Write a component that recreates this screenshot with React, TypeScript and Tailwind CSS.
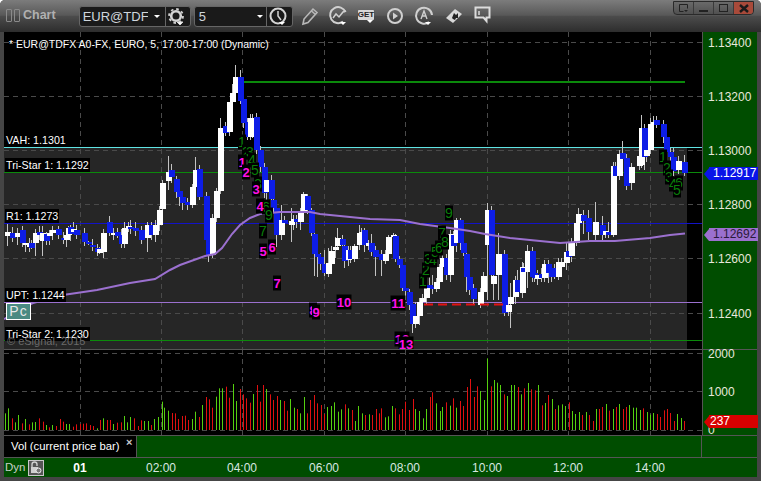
import React from "react";

type C = [number, number, number, "w" | "b", number?, number?];

const candles: C[] = [
  [7,232,236,"w",224,246],[12,233,238,"b"],[17,233,237,"w",228,245],[22,230,243,"b",226,247],[25,243,245,"w",236,252],[29,244,247,"w",238,252],[31,243,248,"b"],[35,233,243,"w",229,256],[39,232,235,"b",226,240],[42,233,241,"w",226,256],[46,234,241,"b"],[49,233,236,"w",230,245],[52,230,233,"w",226,240],[58,229,235,"b"],[63,238,240,"b",232,244],[66,235,240,"w",230,247],[68,228,235,"w",226,240],[70,227,234,"b"],[73,229,232,"w"],[76,230,235,"b"],[84,233,242,"b",228,246],[88,242,244,"b"],[92,245,247,"b"],[97,248,252,"b",244,256],[99,249,253,"w"],[103,233,252,"w",229,258],[109,222,233,"b",216,236],[113,233,235,"w",228,240],[117,232,236,"b",228,238],[121,235,244,"b",229,248],[124,228,244,"w",222,248],[128,226,229,"w",222,232],[130,227,229,"b",220,234],[135,228,231,"b",222,236],[141,230,240,"b",226,244],[147,225,238,"w",222,252],[151,225,235,"b",222,240],[155,225,235,"w",220,242],
  [159,210,225,"w",206,231],[162,183,209,"w",180,212],[168,172,181,"w",156,190],[171,170,177,"b",164,183],[176,179,192,"b",176,198],[179,191,197,"b",188,206],[182,197,203,"b",194,210],[187,202,205,"b",198,210],[192,187,205,"w",184,208],[195,170,187,"w",157,190],[199,169,197,"b",165,200],[206,196,240,"b",192,254],[208,240,255,"b"],[212,218,255,"w",214,258],[216,191,218,"w",188,222],[220,128,191,"w",118,194],[225,126,133,"b",122,136],[229,102,132,"w",104,136],[232,93,102,"w",84,106],[235,77,93,"w",65,96],[240,77,101,"b",70,104],[243,99,123,"b",95,128],[247,122,137,"b",118,140],[250,118,137,"w",114,140],[252,118,135,"w",114,138],[256,117,150,"b",113,154],[260,150,167,"b",146,172],[264,167,193,"b",163,198],[266,180,192,"w",176,205],[271,180,199,"b",175,203],[273,200,208,"b",196,213],[276,208,235,"b",205,247],[281,220,235,"w",205,240],[284,220,223,"b",216,229],[291,221,225,"w",208,242],[293,219,222,"w",215,230],[296,219,222,"b",215,228],[300,212,222,"w",208,230],[303,194,212,"w",192,216],[307,196,210,"b",194,214],[311,210,233,"b",208,236],[314,234,254,"b",232,276],[317,254,257,"b",252,277],[320,257,264,"b",253,270],[324,264,273,"b",250,276],[328,263,274,"w",248,277],[331,251,264,"w",246,272],[335,247,250,"w",237,258],[337,238,246,"w",228,250],[342,239,245,"b",235,252],[344,246,261,"b",244,268],[348,250,260,"w",246,266],[350,250,259,"b",246,263],[354,246,259,"w",244,262],[359,233,245,"w",225,250],[361,232,236,"w",228,240],[364,230,245,"b",228,252],[368,243,246,"w",240,250],[371,243,252,"b",234,256],[375,250,257,"b",246,276],[381,254,260,"b",250,276],[385,254,261,"w",250,264],[388,237,254,"w",235,258],[393,235,237,"w",233,240],[395,236,259,"b",234,262],[399,259,265,"b",256,268],[402,265,288,"b",262,291],[405,288,291,"b",285,300],[409,292,305,"b",289,310],[412,304,324,"b",300,333],[415,316,324,"w",302,328],[419,302,316,"w",298,325],[422,298,302,"w",294,308],[426,285,298,"w",282,305],[429,285,288,"b",275,292],[432,287,289,"b",275,294],[436,282,289,"w",278,292],[439,267,282,"w",264,286],[442,258,267,"w",254,272],[446,258,275,"b",254,280],[450,234,275,"w",230,282],[453,235,246,"b",231,250],[456,220,243,"w",218,252],[460,220,243,"b",218,250],[463,243,253,"b",240,256],[466,254,277,"b",250,292],[469,277,290,"b",272,295],
  [473,288,299,"b",284,305],[480,292,305,"w",288,308],[483,276,292,"w",272,300],[487,210,245,"w",203,300],[491,210,275,"b",206,278],[493,276,284,"w",272,300],[498,254,275,"w",233,300],[504,254,313,"b",250,316],[508,305,312,"w",300,316],[510,297,304,"w",283,328],[515,280,297,"w",276,304],[517,280,292,"b",270,296],[522,267,293,"w",262,298],[523,268,272,"b"],[527,251,272,"w",245,288],[532,251,277,"b",247,282],[534,273,278,"b",268,282],[537,275,279,"w",270,285],[541,274,278,"b",268,282],[544,264,278,"w",260,282],[548,264,273,"b",260,283],[551,268,277,"b",264,282],[554,268,277,"b",264,279],[558,262,277,"w",258,280],[561,262,267,"w",258,272],[566,252,263,"w",243,270],[568,251,257,"b",243,262],[571,243,256,"w",238,262],[576,223,243,"w",217,246],[578,214,223,"w",208,228],[583,215,221,"b",210,234],[588,218,232,"b",210,240],[595,222,235,"w",202,240],[602,225,235,"b",216,240],[605,231,235,"w",225,238],[608,232,235,"b",222,238],[613,166,235,"w",162,237],[615,166,176,"b",162,182],[619,154,176,"w",150,180],[622,153,159,"b",141,170],[626,158,186,"b",154,190],[631,167,183,"w",163,190],[639,156,166,"w",150,170],[641,128,165,"w",115,168],[644,128,157,"b",124,170],[646,150,156,"w",146,162],[650,124,150,"w",118,154],[653,122,125,"w",116,128],[656,120,125,"b",116,128],[663,124,137,"b",120,143],[666,137,152,"b",134,156],[670,152,157,"b",148,172],[673,157,171,"b",148,176],[678,161,170,"w",156,174],[684,162,173,"b",155,176],
];

const vwap = "4,319 12,315 24,307 33,303 63,295 97,290 130,283 155,279 170,270 180,265 205,256 215,254 222,248 232,234 240,225 250,218 260,214 280,212 310,212 320,214 340,216 370,219 400,220 420,224 450,228 470,231 485,234 510,238 540,241 560,243 590,241 615,241 650,238 670,235 685,233.5";

const vol1 = "15g205 25g190 37r220 46g232 55g210 67r235 76g222 87r238 97g232 106g231 118r220 128r230 139g240 148r247 157g240 168r243 179r222 189r230 198g237 207g237 219r245 229r238 239r237 249r236 259r235 269r240 279r243 291g250 301r225 310g220 322r225 331r225 340g237 352r233 362r232 373g213 381g232 391g216 403r220 413r243 424r226 433g228 443g228 453r240 463g222 473g216 485g170 493g188 505g197 516r204 526r205 535r222 545r213 556r212 565r225 575g222 586g200 596r216 607g180 617r156 626r163 637r188 647g155 658g130 666g130 677r125 688r158 698g117 709g168 719r132 728r148 739r160 749r173 760g147 770r120 780r170 790r120 799g132 811r148 820r165 830r153 841g165 851r168 860r197 871g162 881g188 892r192 901g205 911g156 921r205 931r165 943r150 952r175 962r180 973r207 982g186 992g183 1003g172 1013g200 1024g193 1034r178 1045g190 1055r195 1065g228 1075g183 1085g205 1095r210 1106g208 1116r210 1127r192 1137r205";
const vol2 = "3r190 16g217 25g214 37g183 46r190 56r208 67r192 76r170 87r195 98r162 106g192 118g198 128g220 139g192 149r156 157r142 169g175 179g198 187g186 199r172 209g182 220r160 229g188 239r168 250r183 260r126 271r102 281r156 290r124 301g138 311g165 322g40 332r124 341g105 352g113 361g120 373r148 382g153 392g120 403g120 413r126 424g148 433r130 443g114 454r133 464r136 473g120 485r181 494g174 505r150 515g162 524r192 535g181 545g178 556g183 566r172 575g198 586g207 596g201 607r210 617g201 626r210 638r228 647g192 658r192 667r186 677g177 688r197 698g192 707r186 718g177 728r192 739r186 748g180 758g188 769g188 779g195 790r190 800g201 809g209 820g204 830r207 841r216 851r196 860r192 871r204 881r228 892g207 902g219 911r228";

function parseVol(s: string, off: number) {
  return s.split(" ").map((t) => {
    const m = t.match(/(\d+)([gr])(\d+)/)!;
    return { x: Math.round(off + +m[1] / 3), top: 345 + +m[3] / 3, c: m[2] };
  });
}
const vols = [...parseVol(vol1, 0), ...parseVol(vol2, 380)];

const magenta: [string, number, number][] = [
  ["1",242,162],["2",246,172],["3",256,189],["4",260,206],["5",263,251],["6",272,247],["7",277,283],["8",313,310],["9",316,312],["10",344,302],["11",398,303],["12",402,339],["13",406,344],
];
const greens: [string, number, number][] = [
  ["1",242,142],["2",246,152],["3",250,152],["4",252,160],["5",255,170],["3",258,184],["6",266,207],["9",269,215],["7",263,231],
  ["1",423,281],["2",426,270],["3",428,259],["4",433,260],["5",435,252],["6",439,248],["7",442,233],["8",445,242],["9",449,213],
  ["1",663,157],["2",667,168],["3",669,177],["4",673,184],["6",679,183],["5",677,190],
];

const gridY = [42.5, 96.5, 150.5, 204.5, 258.5, 313.5];
const gridX = [80.5, 161.5, 242.5, 324.5, 405.5, 487.5, 568.5, 650.5];
const prices: [string, number][] = [["1.13400",43],["1.13200",97],["1.13000",151],["1.12800",205],["1.12600",259],["1.12400",314]];
const times: [string, number][] = [["01",80],["02:00",161],["04:00",242],["06:00",324],["08:00",405],["10:00",487],["12:00",568],["14:00",650]];

function Mark({ t, x, y, color, bold }: { t: string; x: number; y: number; color: string; bold?: boolean }) {
  const w = t.length > 1 ? 15 : 8;
  return (
    <g>
      <rect x={x - w / 2} y={y - 7.5} width={w} height={15} fill="#000" />
      <text x={x} y={y + 5} textAnchor="middle" fontSize={bold ? 13 : 14} fontWeight={bold ? 700 : 400} fill={color} fontFamily="Liberation Sans, sans-serif">{t}</text>
    </g>
  );
}

function PricePlot() {
  return (
    <svg viewBox="4 32 698 317" width={698} height={317} className="block">
      <rect x={4} y={32} width={698} height={317} fill="#000" />
      <rect x={4} y={148} width={683} height={201} fill="#262626" />
      {gridY.map((y) => <line key={y} x1={4} x2={702} y1={y} y2={y} stroke="#4a4a4a" strokeDasharray="5 4" />)}
      {gridX.map((x) => <line key={x} x1={x} x2={x} y1={32} y2={349} stroke="#4a4a4a" strokeDasharray="5 4" />)}
      <line x1={4} x2={702} y1={147.5} y2={147.5} stroke="#5fe3e3" />
      <line x1={4} x2={702} y1={172.5} y2={172.5} stroke="#0b8a0b" />
      <line x1={4} x2={702} y1={223.5} y2={223.5} stroke="#1212c8" />
      <line x1={4} x2={702} y1={302.5} y2={302.5} stroke="#9b70cf" />
      <line x1={4} x2={702} y1={340.5} y2={340.5} stroke="#0b8a0b" />
      <line x1={242} x2={685} y1={82} y2={82} stroke="#0b8a0b" strokeWidth={2} />
      {candles.map((c, i) => {
        const hi = c[4] ?? c[1] - ((i * 5) % 7) - 1;
        const lo = c[5] ?? c[2] + ((i * 3) % 9) + 1;
        return <line key={"w" + i} x1={c[0] + 0.5} x2={c[0] + 0.5} y1={hi} y2={lo} stroke="#c4c4c4" />;
      })}
      {candles.map((c, i) => (
        <rect key={"b" + i} x={c[0] - 2.5} y={c[1]} width={6} height={c[2] - c[1]} fill={c[3] === "w" ? "#ffffff" : "#0d1de6"} shapeRendering="crispEdges" />
      ))}
      <line x1={424} x2={508} y1={304.5} y2={304.5} stroke="#e41212" strokeWidth={2} strokeDasharray="9 5" />
      <polyline points={vwap} fill="none" stroke="#9b70cf" strokeWidth={2} />
      {greens.map(([t, x, y], i) => <Mark key={"g" + i} t={t} x={x} y={y} color="#0a7d0a" />)}
      {magenta.map(([t, x, y], i) => <Mark key={"m" + i} t={t} x={x} y={y} color="#ff11e6" bold />)}
    </svg>
  );
}

function VolPlot() {
  return (
    <svg viewBox="4 350 698 85" width={698} height={85} className="block">
      <rect x={4} y={350} width={698} height={85} fill="#000" />
      {[353.5, 391.5, 430.5].map((y) => <line key={y} x1={4} x2={702} y1={y} y2={y} stroke="#4a4a4a" strokeDasharray="5 4" />)}
      {gridX.map((x) => <line key={x} x1={x} x2={x} y1={350} y2={435} stroke="#4a4a4a" strokeDasharray="5 4" />)}
      {vols.map((v, i) => (
        <rect key={i} x={v.x} y={v.top} width={1} height={430 - v.top} fill={v.c === "g" ? "#55d00f" : "#e01010"} />
      ))}
    </svg>
  );
}

function Caret() {
  return <path d="M0 0h6l-3 3z" fill="#fff" />;
}

function Gear() {
  return (
    <svg width={22} height={21} viewBox="0 0 22 21" fill="none" stroke="#d4d4d4">
      <circle cx={10} cy={10} r={4.8} strokeWidth={2.6} />
      <circle cx={10} cy={10} r={7} strokeWidth={1.8} strokeDasharray="2.6 2.9" />
      <g transform="translate(11 16)"><Caret /></g>
    </svg>
  );
}
function Clock() {
  return (
    <svg width={22} height={21} viewBox="0 0 22 21" fill="none" stroke="#d4d4d4" strokeWidth={2}>
      <circle cx={10} cy={10} r={7.5} />
      <path d="M10 5v5l3 4" strokeWidth={1.5} />
      <g transform="translate(11 16)" stroke="none"><Caret /></g>
    </svg>
  );
}
function Pencil() {
  return (
    <svg width={18} height={20} viewBox="0 0 18 20" fill="none" stroke="#b8b8b8" strokeWidth={1.6}>
      <path d="M2 18l1-5L12 3l4 3.5L7 16.5z" />
      <path d="M10.5 5l4 3.5" />
    </svg>
  );
}
function Studies() {
  return (
    <svg width={22} height={22} viewBox="0 0 22 22" fill="none" stroke="#d0d0d0" strokeWidth={2}>
      <path d="M15 16.5A8 8 0 1 1 17.5 7" />
      <path d="M5 13l3-4 3 3 4-5 3-1" strokeWidth={1.5} />
      <g transform="translate(12 17)" stroke="none"><Caret /></g>
    </svg>
  );
}
function Play() {
  return (
    <svg width={18} height={18} viewBox="0 0 18 18" fill="none" stroke="#d0d0d0" strokeWidth={2}>
      <circle cx={9} cy={9} r={7} />
      <path d="M7 5.5l5 3.5-5 3.5z" fill="#d0d0d0" stroke="none" />
    </svg>
  );
}
function Alert() {
  return (
    <svg width={22} height={22} viewBox="0 0 22 22" fill="none" stroke="#d0d0d0" strokeWidth={2}>
      <path d="M15 17A8 8 0 1 1 18 10" />
      <path d="M7 14l3-8 3 8M8 11h4" strokeWidth={1.4} />
      <g transform="translate(11 17)" stroke="none"><Caret /></g>
    </svg>
  );
}
function Diamond() {
  return (
    <svg width={18} height={18} viewBox="0 0 18 18">
      <path d="M1 11l9-9 7 5-9 9z" fill="#d8d8d8" />
      <path d="M7 11l2-5 2 2 2-2v5h-2l-1 2-2-1z" fill="#222" />
    </svg>
  );
}
function Speech() {
  return (
    <svg width={17} height={18} viewBox="0 0 17 18" fill="none" stroke="#dcdcdc" strokeWidth={2}>
      <path d="M1.5 1.5h14v10h-3v3.5l-3-3.5h-8z" />
      <path d="M5 5v4" strokeWidth={1.5} />
    </svg>
  );
}
function Lock() {
  return (
    <svg width={16} height={16} viewBox="0 0 16 16" fill="none" stroke="#d0d0d0">
      <rect x={0.5} y={0.5} width={15} height={15} fill="#555" stroke="#c8c8c8" />
      <path d="M4 7V4.5a2.5 2.5 0 0 1 5 0V6" strokeWidth={1.4} />
      <rect x={3} y={7} width={7} height={6} fill="#d0d0d0" stroke="none" />
      <circle cx={10.5} cy={10.5} r={2.5} fill="#777" stroke="#eee" />
    </svg>
  );
}

function Label({ text, left, top }: { text: string; left: number; top: number }) {
  return (
    <span className="absolute bg-black text-white text-[10.7px] leading-[14px] px-px whitespace-nowrap" style={{ left, top }}>
      {text}
    </span>
  );
}

function Tag({ text, top, bg, color }: { text: string; top: number; bg: string; color: string }) {
  return (
    <div className="absolute left-px flex items-center" style={{ top }}>
      <div className="w-0 h-0 border-y-[6px] border-y-transparent border-r-[5px]" style={{ borderRightColor: bg }} />
      <div className="w-[49px] h-[13px] text-[12px] leading-[13px] pl-1" style={{ background: bg, color }}>{text}</div>
    </div>
  );
}

export default function App() {
  return (
    <div
      className="w-[761px] h-[481px] bg-[#454545] overflow-hidden flex flex-col rounded-t-[5px] text-[#e8e8dc] text-[12px]"
      style={{ fontFamily: "'Liberation Sans', Arial, sans-serif" }}
    >
      <div className="h-[32px] flex items-start relative bg-[linear-gradient(#7c7c7c_0%,#585858_48%,#4c4c4c_50%,#2d2d2d_100%)]">
        <div className="flex gap-[2px] ml-[6px] mt-[9px]">
          <div className="w-[6px] h-[13px] border border-[#8a8a8a] rounded-[1px]" />
          <div className="w-[6px] h-[13px] border border-[#8a8a8a] rounded-[1px]" />
        </div>
        <span className="ml-[3px] mt-[8px] text-[12.5px] font-bold leading-[15px] text-[#b0b0b0]">Chart</span>
        <div className="ml-[23px] mt-[6px] w-[112px] h-[21px] bg-[#1a1a1a] border border-[#666] rounded-[3px] flex items-center">
          <span className="pl-[3px] w-[68px] overflow-hidden whitespace-nowrap text-[13px] text-[#cfd6dc]">EUR@TDF&gt;</span>
          <svg width={6} height={3} className="ml-[6px]"><Caret /></svg>
          <div className="ml-[5px] h-full w-[1px] bg-[#666]" />
          <Gear />
        </div>
        <div className="ml-[3px] mt-[6px] w-[99px] h-[21px] bg-[#1a1a1a] border border-[#666] rounded-[3px] flex items-center">
          <span className="pl-[4px] w-[62px] text-[13px] text-[#cfd6dc]">5</span>
          <svg width={6} height={3}><Caret /></svg>
          <div className="ml-[3px] h-full w-[1px] bg-[#666]" />
          <div className="pl-[1px]"><Clock /></div>
        </div>
        <div className="ml-[8px] mt-[6px]"><Pencil /></div>
        <div className="ml-[9px] mt-[5px]"><Studies /></div>
        <div className="ml-[8px] mt-[10px] relative w-[16px] h-[12px]">
          <div className="bg-[#d8d8d8] text-[#222] text-[8px] font-bold leading-[10px] text-center rounded-[1px]">GET</div>
          <svg width={6} height={3} className="absolute left-[9px] top-[10px]"><Caret /></svg>
        </div>
        <div className="ml-[12px] mt-[7px]"><Play /></div>
        <div className="ml-[10px] mt-[5px]"><Alert /></div>
        <div className="ml-[9px] mt-[7px]"><Diamond /></div>
        <div className="ml-[11px] mt-[6px]"><Speech /></div>
        <div className="absolute right-[7px] top-[1px] h-[14px] w-[81px] flex border border-[#2a2a2a] rounded-b-[4px] overflow-hidden bg-[linear-gradient(#6a6a6a,#505050)]">
          <div className="w-[20px] flex items-center justify-center border-r border-[#3a3a3a]">
            <svg width={10} height={9} fill="none" stroke="#222"><path d="M.5.5h8v4M.5.5v7h4" /><path d="M5 6h4l-2 2z" fill="#222" stroke="none" /></svg>
          </div>
          <div className="w-[20px] flex items-end justify-center pb-[2px] border-r border-[#3a3a3a]"><div className="w-[9px] h-[2px] bg-[#222]" /></div>
          <div className="w-[20px] flex items-center justify-center border-r border-[#3a3a3a]"><div className="w-[9px] h-[8px] border border-[#222]" /></div>
          <div className="flex-1 flex items-center justify-center bg-[#a84a3a]">
            <svg width={10} height={9} stroke="#1a1a1a" strokeWidth={2.4}><path d="M1 1l8 7M9 1L1 8" /></svg>
          </div>
        </div>
      </div>

      <div className="mx-[4px] flex flex-col">
        <div className="flex h-[318px] border-b border-[#555]">
          <div className="relative w-[698px]">
            <PricePlot />
            <span className="absolute left-[5px] top-[5px] text-white text-[10.5px] leading-[14px] whitespace-nowrap">* EUR@TDFX A0-FX, EURO, 5, 17:00-17:00 (Dynamic)</span>
            <Label text="VAH: 1.1301" left={1} top={101} />
            <Label text="Tri-Star 1: 1.1292" left={1} top={126} />
            <Label text="R1: 1.1273" left={1} top={177} />
            <Label text="UPT: 1.1244" left={1} top={256} />
            <Label text="Tri-Star 2: 1.1230" left={1} top={295} />
            <div className="absolute left-[2px] top-[271px] w-[25px] h-[17px] bg-[#4a8a82] border border-white text-[#e8e8e8] text-[14px] tracking-[1px] leading-[15px] text-center">Pc</div>
            <span className="absolute left-[3px] top-[303px] text-[#6a6a6a] text-[11px] leading-[13px]">© eSignal, 2015</span>
          </div>
          <div className="relative flex-1 bg-[#004d00] border-l border-[#555]">
            {prices.map(([t, y]) => (
              <span key={t} className="absolute left-[5px] text-[12px] leading-[14px]" style={{ top: y - 32 - 7 }}>{t}</span>
            ))}
            <Tag text="1.12917" top={135} bg="#0a14e8" color="#fff" />
            <Tag text="1.12692" top={196} bg="#9b70cf" color="#2a1a3a" />
          </div>
        </div>

        <div className="flex h-[85px]">
          <VolPlot />
          <div className="relative flex-1 bg-[#004d00] border-l border-[#555]">
            <span className="absolute left-[5px] top-[-3px] text-[12px] leading-[14px]">2000</span>
            <span className="absolute left-[5px] top-[35px] text-[12px] leading-[14px]">1000</span>
            <span className="absolute left-[5px] top-[73px] text-[12px] leading-[14px]">0</span>
            <div className="absolute left-px top-[65px] flex items-center">
              <div className="w-0 h-0 border-y-[6px] border-y-transparent border-r-[5px] border-r-[#d80000]" />
              <div className="w-[49px] h-[13px] bg-[#d80000] text-white text-[12px] leading-[13px] pl-[1px]">237</div>
            </div>
          </div>
        </div>

        <div className="flex h-[23px] border-y border-[#555]">
          <div className="w-[133px] bg-black border-r border-[#555] relative pl-[7px] text-white text-[11.3px] leading-[21px]">
            Vol (current price bar)
            <span className="absolute left-[122px] top-[-4px] text-[#ccc] text-[11px] font-bold">×</span>
          </div>
          <div className="w-[565px] bg-[#004d00] border-r border-[#555]" />
          <div className="flex-1 bg-[#004d00]" />
        </div>

        <div className="h-[19px] bg-[#004d00] relative flex items-center">
          <span className="ml-[1px] text-[11.5px] text-[#c8d0c8]">Dyn</span>
          <div className="ml-[3px]"><Lock /></div>
          {times.map(([t, x], i) => (
            <span
              key={t}
              className={i === 0 ? "absolute -translate-x-1/2 text-[12px] font-bold text-white" : "absolute -translate-x-1/2 text-[12px] text-[#d8e8e0]"}
              style={{ left: x - 4 }}
            >
              {t}
            </span>
          ))}
        </div>
      </div>
    </div>
  );
}
